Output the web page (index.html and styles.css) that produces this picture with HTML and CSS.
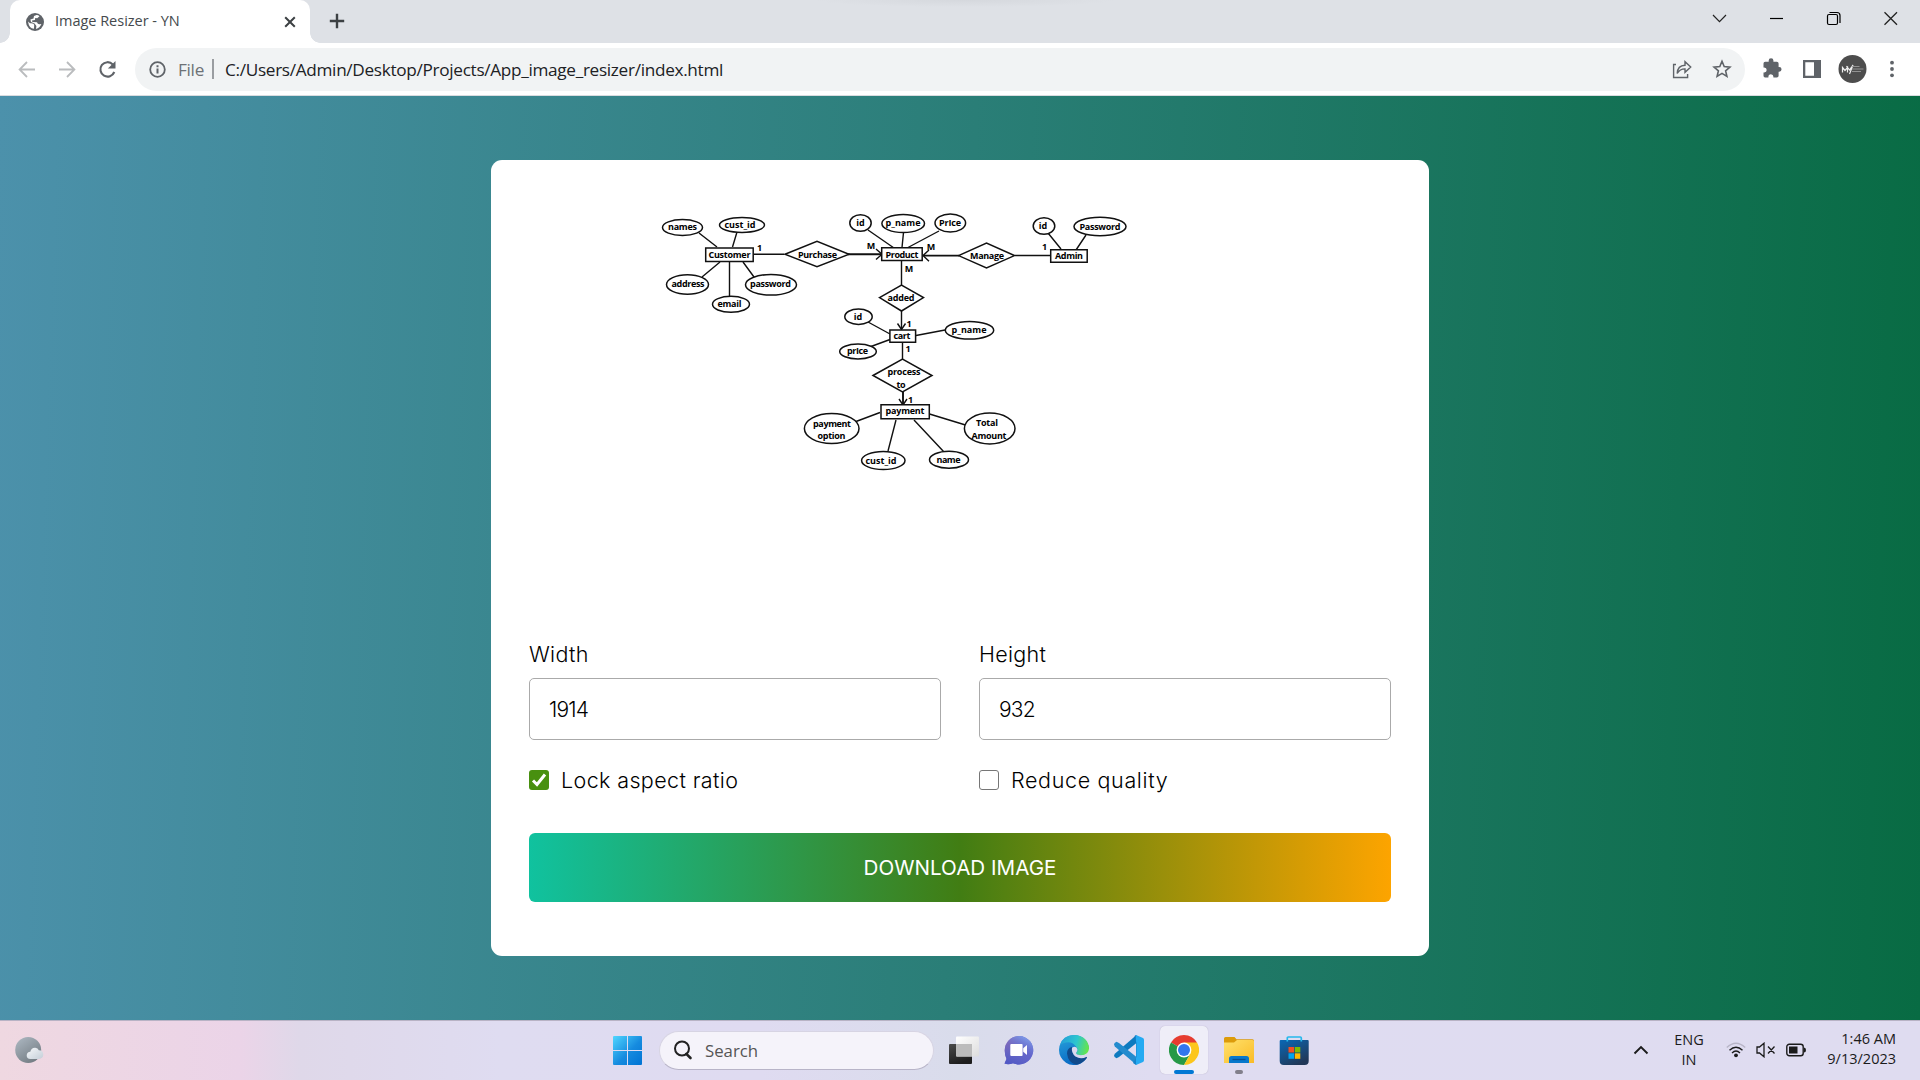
FILE: index.html
```html
<!DOCTYPE html>
<html lang="en">
<head>
<meta charset="utf-8">
<title>Image Resizer - YN</title>
<link rel="stylesheet" href="styles.css">
</head>
<body>
<div class="tabstrip">
  <div class="tab">
    <svg class="favicon" width="18" height="18" viewBox="0 0 18 18"><circle cx="9" cy="9" r="9" fill="#5f6368"/><path d="M2 8.5 L4 10.2 Q7.8 9.8 8.2 11.8 L8 15.8 Q3 15.6 2 8.5Z M10.5 2 Q12 1.8 13.5 3.2 L11.2 5.2 L9.2 5 L9 7 L6 7.6 L6.4 9 L11 9.2 Q11.6 11.5 13.6 11.3 L15.4 11 Q13.8 15 10 15.9 L10.4 13 L8.6 10.4 L5 9 L4.4 6.5 L7.5 5.5 L8 3Z" fill="#fff"/></svg>
    <span class="tab-title">Image Resizer - YN</span>
    <svg class="tab-close" width="12" height="12" viewBox="0 0 12 12"><path d="M1.2 1.2 10.8 10.8M10.8 1.2 1.2 10.8" stroke="#3c4043" stroke-width="2"/></svg>
  </div>
  <svg class="new-tab" width="16" height="16" viewBox="0 0 16 16"><path d="M8 .8V15.2M.8 8H15.2" stroke="#3c4043" stroke-width="2.4"/></svg>
  <div class="window-controls">
    <svg width="57" height="36" viewBox="0 0 57 36"><path d="M22 15l6.5 6.7L35 15" fill="none" stroke="#222" stroke-width="1.2"/></svg>
    <svg width="57" height="36" viewBox="0 0 57 36"><path d="M22 18.5h13" stroke="#000" stroke-width="1.2"/></svg>
    <svg width="57" height="36" viewBox="0 0 57 36"><rect x="22.5" y="14.5" width="10" height="10" rx="1.5" fill="none" stroke="#000" stroke-width="1.2"/><path d="M24.5 12.5h7.5q3 0 3 3V23" fill="none" stroke="#000" stroke-width="1.2"/></svg>
    <svg width="57" height="36" viewBox="0 0 57 36"><path d="M22.5 12.2l12.5 12.5M35 12.2L22.500 24.700" stroke="#222" stroke-width="1.3"/></svg>
  </div>
</div>
<div class="toolbar">
  <svg width="40" height="40" viewBox="0 0 40 40"><path d="M28 20.500H13M20 13l-7.400 7.500L20 28" fill="none" stroke="#babcbe" stroke-width="1.800"/></svg>
  <svg width="40" height="40" viewBox="0 0 40 40"><path d="M12 20.500H27M20 13l7.400 7.500L20 28" fill="none" stroke="#babcbe" stroke-width="1.800"/></svg>
  <svg width="40" height="40" viewBox="0 0 40 40"><path d="M27.300 23a7.200 7.200 0 1 1-1.500-7.600" fill="none" stroke="#5f6368" stroke-width="2.100"/><path d="M28.500 12v7.600h-7.600z" fill="#5f6368"/></svg>
  <div class="omnibox">
    <svg width="17" height="17" viewBox="0 0 17 17"><circle cx="8.500" cy="8.500" r="7.300" fill="none" stroke="#5f6368" stroke-width="1.800"/><path d="M8.500 7.500v5M8.500 4.200v2" stroke="#5f6368" stroke-width="2"/></svg>
    <span class="scheme">File</span>
    <span class="divider"></span>
    <span class="url">C:/Users/Admin/Desktop/Projects/App_image_resizer/index.html</span>
    <svg class="share" width="20" height="20" viewBox="0 0 20 20"><path d="M4 5.500H1.600v13h14V15M5.200 14.500q.4-8 7.800-8.200V2.700l5.700 5.300-5.700 5.300V9.900q-5-.1-7.800 4.600z" fill="none" stroke="#5f6368" stroke-width="1.400"/></svg>
    <svg class="star" width="20" height="20" viewBox="0 0 20 20"><path d="M10 2.300l2.200 5.300 5.700.5-4.300 3.700 1.300 5.600-4.900-3-4.900 3 1.300-5.600L2.100 8.100l5.700-.5z" fill="none" stroke="#5f6368" stroke-width="1.600"/></svg>
  </div>
  <div class="tools">
    <svg width="40" height="40" viewBox="0 0 40 40"><path d="M11.500 14.500q0-1.700 1.700-1.700h3.500v-1.200a2.300 2.300 0 0 1 4.700 0v1.200h3.400q1.800 0 1.800 1.700V18h.6a2.300 2.300 0 0 1 0 4.700h-.6v4.100q0 1.700-1.800 1.700h-3.400v-.8a2.500 2.500 0 0 0-5 0v.8h-3.300q-1.600 0-1.600-1.700v-3.300h.7a2.500 2.500 0 0 0 0-5h-.7z" fill="#5f6368"/></svg>
    <svg width="40" height="40" viewBox="0 0 40 40"><path d="M11 11h18v18H11zM13.300 13.300v13.400h8.700V13.300z" fill="#5f6368" fill-rule="evenodd"/></svg>
    <svg width="40" height="40" viewBox="0 0 40 40"><circle cx="20.500" cy="20" r="14" fill="#4d4d4d"/><path d="M10.500 23.500v-5l2.500 3 2.500-3v5M14.500 17l3 4 3.500-5-3.500 9" fill="none" stroke="#eee" stroke-width="1.200"/><path d="M19.500 17.500h8M20 20h11.500M20 22.500h9" stroke="#9a9a9a" stroke-width=".9"/></svg>
    <svg width="40" height="40" viewBox="0 0 40 40"><g fill="#5f6368"><circle cx="20" cy="13.700" r="1.900"/><circle cx="20" cy="20" r="1.900"/><circle cx="20" cy="26.300" r="1.900"/></g></svg>
  </div>
</div>

<main class="page">
  <div class="wrapper">
    <svg class="preview" width="862" height="422" viewBox="529 198 862 422">
      <g class="links">
        <path d="M699 233l18 14M737 232l-4.500 15M753.500 254.300H784M720 262l-18 15M729.500 261v36M743 262l11 15"/>
        <path d="M868 230l26 18M903.500 232.500l-1.500 15M939 231l-31 16.500M901.500 261v24M901.500 311v18M1015 255.500h35M1048 233l13 16M1086 235l-10 15"/>
        <path d="M868 322l22 12M890 339.500l-19 7M916 335.500l29-5.500M902.500 343v16"/>
        <path d="M880 412.500l-24 9M896 420l-8 31M914 420l30 32M929.500 414l36 11"/>
        <path class="thick" d="M848 254.300h33M924 255.600h35M903 392v13"/>
        <path d="M876 249l6 5.300-6 5.300M929 250l-6 5.600 6 5.600M897.500 323.500l4 6 4-6M899 399l4 6 4-6"/>
      </g>
      <g class="shapes">
        <ellipse cx="682.500" cy="227.500" rx="20" ry="8"/><ellipse cx="742" cy="225" rx="22.500" ry="7.500"/>
        <ellipse cx="687.500" cy="284.500" rx="21" ry="9.700"/><ellipse cx="771" cy="284.800" rx="25.500" ry="10.300"/><ellipse cx="731" cy="304.300" rx="18.500" ry="8"/>
        <ellipse cx="860.500" cy="223" rx="10.700" ry="8.200"/><ellipse cx="903.200" cy="223.500" rx="21.300" ry="9"/><ellipse cx="950.300" cy="223" rx="15.300" ry="9"/>
        <ellipse cx="1044" cy="226" rx="10.800" ry="8.300"/><ellipse cx="1100" cy="226.500" rx="26" ry="9.200"/>
        <ellipse cx="858.500" cy="316.700" rx="13.700" ry="7.700"/><ellipse cx="858" cy="351.500" rx="18.300" ry="7.500"/><ellipse cx="969.500" cy="330.200" rx="24.200" ry="8.800"/>
        <ellipse cx="831.700" cy="428.500" rx="27.300" ry="15"/><ellipse cx="883.300" cy="460.500" rx="21.700" ry="9"/><ellipse cx="949" cy="459.700" rx="19.500" ry="8.500"/><ellipse cx="989.700" cy="428.500" rx="25.300" ry="15.500"/>
        <path d="M785 254.300l32-13 32 13-32 12.500zM958.500 255.600l28-12.600 28 12.600-28 12.400zM879.500 297.600l22-12.600 22 12.600-22 13.400zM873 375.500l29.500-16.500 29.500 16.500-29.500 16.500z"/>
        <path class="box" d="M705.700 248h47.500v13.500h-47.500zM881.700 247.700h40.500v12.800h-40.500zM1050.700 249.700h36.500v12.500h-36.500zM889.900 330h25.700v12.300h-25.700zM881 404.800h48.300v14H881z"/>
      </g>
      <g class="names">
        <text x="682.500" y="230" textLength="29">names</text><text x="740" y="227.500" textLength="31">cust_id</text>
        <text x="729.500" y="257.500" textLength="42">Customer</text><text x="759.500" y="250.500">1</text>
        <text x="817.500" y="257.500" textLength="39">Purchase</text><text x="688" y="287" textLength="33">address</text>
        <text x="770.500" y="287" textLength="41">password</text><text x="729.500" y="306.500" textLength="24">email</text>
        <text x="860.500" y="226">id</text><text x="903" y="225.500" textLength="35">p_name</text><text x="950" y="226" textLength="22">PrIce</text>
        <text x="871" y="248.500">M</text><text x="931" y="249.500">M</text><text x="902" y="257.500" textLength="33">Product</text>
        <text x="909" y="271.500">M</text><text x="987" y="258.500" textLength="34">Manage</text><text x="1044.500" y="250">1</text>
        <text x="1043" y="229">id</text><text x="1100" y="230" textLength="41">Password</text><text x="1069" y="259" textLength="28">Admin</text>
        <text x="901" y="300.500" textLength="27">added</text><text x="909" y="326.500">1</text><text x="858" y="320">id</text>
        <text x="902" y="338.500" textLength="17">cart</text><text x="969" y="332.500" textLength="35">p_name</text>
        <text x="857.500" y="354" textLength="21">prIce</text><text x="908" y="352">1</text>
        <text x="904" y="375" textLength="33">process</text><text x="901" y="387.500" textLength="9">to</text><text x="910.500" y="402.500">1</text>
        <text x="905" y="414" textLength="39">payment</text><text x="832" y="427" textLength="38">payment</text><text x="831.500" y="439" textLength="28">option</text>
        <text x="881" y="463.500" textLength="31">cust_id</text><text x="948.500" y="462.500" textLength="24">name</text>
        <text x="987" y="425.500" textLength="22">Total</text><text x="989" y="438.500" textLength="35">Amount</text>
      </g>
    </svg>
    <div class="row sizes">
      <label class="column"><span>Width</span><input type="text" value="1914"></label>
      <label class="column"><span>Height</span><input type="text" value="932"></label>
    </div>
    <div class="row checkboxes">
      <label class="check lock"><span class="tick on"><svg width="20" height="20" viewBox="0 0 20 20"><path d="M4 10.500l4 4 8-10" fill="none" stroke="#fff" stroke-width="3"/></svg></span><span>Lock aspect ratio</span></label>
      <label class="check quality"><span class="tick"></span><span>Reduce quality</span></label>
    </div>
    <button class="download-btn">DOWNLOAD IMAGE</button>
  </div>
</main>

<footer class="taskbar">
  <svg class="weather" width="30" height="28" viewBox="0 0 30 28">
    <defs><linearGradient id="moon" x1="0" y1="0" x2=".7" y2="1"><stop offset="0" stop-color="#afbac4"/><stop offset="1" stop-color="#737c83"/></linearGradient><linearGradient id="cloud" x1="0" y1="0" x2="1" y2="1"><stop stop-color="#f6f8fa"/><stop offset="1" stop-color="#c4ced8"/></linearGradient></defs>
    <circle cx="13.200" cy="14" r="13" fill="url(#moon)"/><path d="M15.500 23q-4-.4-3.800-3.800.3-3 3.600-3.400 1.200-4.300 5-4 2.700.3 3.500 2.500 4.400 0 4.500 4.300 0 4-4.400 4.400z" fill="url(#cloud)"/>
  </svg>
  <svg class="start" width="29" height="29" viewBox="0 0 29 29"><defs><linearGradient id="win" x1="0" y1="0" x2="1" y2="1"><stop stop-color="#50d6ff"/><stop offset=".55" stop-color="#168bdf"/><stop offset="1" stop-color="#0073d4"/></linearGradient></defs><path d="M0 1q0-1 1-1h13v14H0zM15 0h13q1 0 1 1v13H15zM0 15h14v14H1q-1 0-1-1zM15 15h14v13q0 1-1 1H15z" fill="url(#win)"/></svg>
  <div class="search"><svg width="20" height="20" viewBox="0 0 20 20"><circle cx="9" cy="8.500" r="7" fill="none" stroke="#222" stroke-width="2"/><path d="M13.300 13.800l4.200 4.200" stroke="#222" stroke-width="2.600" stroke-linecap="round"/></svg><span>Search</span></div>
  <div class="apps">
    <div class="app"><svg width="30" height="30" viewBox="0 0 30 30"><defs><linearGradient id="tv" x1="0" y1="0" x2=".4" y2="1"><stop stop-color="#4b4b4b"/><stop offset="1" stop-color="#1d1d1d"/></linearGradient><linearGradient id="tw" x1="0" y1="0" x2="1" y2="1"><stop stop-color="#fff"/><stop offset="1" stop-color="#ddd"/></linearGradient></defs><rect y="9" width="23" height="20" rx="1" fill="url(#tv)"/><rect x="7" y="1.500" width="23" height="20" rx="1" fill="url(#tw)"/><path d="M7 9h16v12.500H8q-1 0-1-1z" fill="#bcbcbc"/></svg></div>
    <div class="app"><svg width="30" height="30" viewBox="0 0 30 30"><defs><linearGradient id="chat" x1="0" y1=".2" x2="1" y2=".6"><stop stop-color="#9569ab"/><stop offset=".5" stop-color="#6264c7"/><stop offset="1" stop-color="#5f63d2"/></linearGradient><linearGradient id="cg" x1=".3" y1="1" x2=".8" y2="0"><stop stop-color="#5159c5"/><stop offset=".5" stop-color="#6869c7" stop-opacity=".5"/><stop offset="1" stop-color="#83a5ef"/></linearGradient></defs><path d="M15 1a14.300 14.300 0 1 1-6 27.300Q4 30 .5 28.500L2.500 24Q.7 20 .7 15.500A14.300 14.300 0 0 1 15 1z" fill="url(#chat)"/><path d="M15 1a14.300 14.300 0 1 1-6 27.300Q4 30 .5 28.500L2.500 24Q.7 20 .7 15.500A14.300 14.300 0 0 1 15 1z" fill="url(#cg)"/><rect x="6.300" y="9" width="12.300" height="12" rx="1" fill="#fff"/><path d="M19.200 13.200l3.800-3.200v10l-3.800-3.200z" fill="#fff"/></svg></div>
    <div class="app"><svg width="30" height="30" viewBox="0 0 30 30"><defs><linearGradient id="e1" x1="0" y1=".3" x2="1" y2=".5"><stop stop-color="#249dd8"/><stop offset=".55" stop-color="#2dc6cf"/><stop offset="1" stop-color="#65e54b"/></linearGradient><linearGradient id="e2" x1="0" y1="0" x2=".4" y2="1"><stop stop-color="#2aa4dc"/><stop offset="1" stop-color="#0869c3"/></linearGradient></defs><path d="M15 0a15 15 0 1 0 12.500 23.300L17 18 30 14A15 15 0 0 0 15 0z" fill="url(#e2)"/><path d="M1 10Q4 0 15 0C25 0 30 7 30 13.500Q29.500 20 22.500 20.300 17.500 20 17 18 20 15 17 11.500 13 6 7 7.500 3 8 1 10z" fill="url(#e1)"/><path d="M13 12Q8 13 8 18.500q1 9 9 11.300Q24 28.500 28 22.700q0-1.500-1.300-.9Q21 24 16.500 21.500 12.500 18.500 13 12z" fill="#114a8b"/><path d="M13 12.700q4.500-2.500 5.500 1.800 0 1.500-1.500 3.500.3 2 5.500 2.300 5 0 7-3l-1.800 4.500q-6 3.200-11.200-.3Q12 17.500 13 12.700z" fill="#dad9ee"/></svg></div>
    <div class="app"><svg width="30" height="30" viewBox="0 0 30 30"><path d="M0 20.500q0 1.500 2.500 2.700L5 22 22.500 8V0L.8 18.800z" fill="#0e7abf"/><path d="M0 9.500Q0 8 2.500 6.700L5 8l17.500 14v8L.8 11.500z" fill="#238bce"/><path d="M22 0l7 3q1 .5 1 2v20q0 1.500-1 2l-7 3z" fill="#25aaf2"/><path d="M20.500 1L22 0v30l-3-2 3.500-6V8z" fill="#1583cb"/></svg></div>
    <div class="app active"><svg width="30" height="30" viewBox="0 0 30 30"><path d="M15 15L2 7.500Q6.500 0 15 0t13 7.500z" fill="#e63c30"/><path d="M15 15L2 7.500A15 15 0 0 0 15 30l6.500-11.500z" fill="#279947"/><path d="M15 7.500h13A15 15 0 0 1 15 30l6.500-11.500z" fill="#fcc61c"/><circle cx="15" cy="15" r="7.400" fill="#fff"/><circle cx="15" cy="15" r="6" fill="#3276ed"/></svg><i class="mark"></i></div>
    <div class="app running"><svg width="30" height="30" viewBox="0 0 30 30"><defs><linearGradient id="fold" x1="0" y1="0" x2="1" y2="1"><stop stop-color="#ffe16c"/><stop offset="1" stop-color="#fabb26"/></linearGradient></defs><path d="M0 3.500Q0 2 1.500 2h9l2 2.300H28.500Q30 4.300 30 6v5H0z" fill="#dc9b0a"/><path d="M0 7.500h10l3-2.500h15.500q1.500 0 1.500 1.500V28H0z" fill="url(#fold)"/><path d="M5 28v-4.500q0-2.500 2.500-2.500h15q2.500 0 2.500 2.500V28z" fill="#0878cc"/><path d="M8.500 24.500h13" stroke="#084f93" stroke-width="1.300"/></svg><i class="mark"></i></div>
    <div class="app"><svg width="30" height="30" viewBox="0 0 30 30"><defs><linearGradient id="st" x1="0" y1="0" x2=".6" y2="1"><stop stop-color="#0968b6"/><stop offset="1" stop-color="#213858"/></linearGradient></defs><path d="M.7 6q0-1 1-1h27q1 0 1 1v20q0 4-4 4h-21q-4 0-4-4z" fill="url(#st)"/><path d="M8.300 6.500V3q0-1 1-1h12q1 0 1 1v3.500" fill="none" stroke="#26b8ec" stroke-width="1.700"/><path d="M9.500 12H15v5.500H9.500z" fill="#f25022"/><path d="M15.800 12h5.500v5.500h-5.500z" fill="#7fba00"/><path d="M9.500 18.300H15v5.500H9.500z" fill="#00a4ef"/><path d="M15.800 18.300h5.500v5.500h-5.500z" fill="#ffb900"/></svg></div>
  </div>
  <div class="tray">
    <svg class="more" width="16" height="10" viewBox="0 0 16 10"><path d="M1.500 8.500L8 2l6.500 6.500" fill="none" stroke="#1b1b1b" stroke-width="1.900"/></svg>
    <div class="lang">ENG<br>IN</div>
    <svg class="wifi" width="20" height="16" viewBox="0 0 20 16"><g fill="none" stroke="#1b1b1b" stroke-width="1.400"><path d="M.8 5.500q9.200-8.700 18.400 0" stroke="#b8b5c7"/><path d="M3.500 8.300q6.500-6 13 0M6 10.900q4-3.600 8 0"/></g><circle cx="10" cy="13.300" r="1.900" fill="#1b1b1b"/></svg>
    <svg class="sound" width="20" height="16" viewBox="0 0 20 16"><path d="M1 5h2.500L8 1.200v13.600L3.500 11H1zM12 4.500l6.500 7M18.500 4.500l-6.500 7" fill="none" stroke="#1b1b1b" stroke-width="1.300"/></svg>
    <svg class="battery" width="20" height="14" viewBox="0 0 20 14"><rect x=".8" y="1.300" width="16.400" height="11.400" rx="2.500" fill="none" stroke="#1b1b1b" stroke-width="1.400"/><rect x="3" y="3.500" width="8.500" height="7" fill="#1b1b1b"/><path d="M18 4.500q2 0 2 2.500t-2 2.500z" fill="#1b1b1b"/></svg>
    <div class="clock">1:46 AM<br>9/13/2023</div>
  </div>
</footer>
</body>
</html>
```

FILE: styles.css
```css
* { box-sizing: border-box; }
body {
  margin: 0;
  height: 1080px;
  overflow: hidden;
  display: flex;
  flex-direction: column;
  font-family: "Open Sans", sans-serif;
}
svg { display: block; flex: none; }

/* browser chrome */
.tabstrip {
  height: 43px;
  flex: none;
  display: flex;
  background: radial-gradient(ellipse 150px 7px at 965px 0, #d5d8dd, #dee1e6);
}
.tab {
  position: relative;
  width: 300px;
  margin-left: 10px;
  padding: 0 14px 0 16px;
  display: flex;
  align-items: center;
  background: #fff;
  border-radius: 10px 10px 0 0;
}
.tab::before, .tab::after {
  content: "";
  position: absolute;
  bottom: 0;
  width: 10px;
  height: 10px;
}
.tab::before { left: -10px; background: radial-gradient(circle at 0 0, transparent 9.5px, #fff 10px); }
.tab::after { right: -10px; background: radial-gradient(circle at 100% 0, transparent 9.5px, #fff 10px); }
.favicon { margin-right: 11px; }
.tab-title { padding-bottom: 2px; font-size: 14.5px; color: #45494d; letter-spacing: -.02px; white-space: nowrap; }
.tab-close { margin-left: auto; }
.new-tab { margin: 13px 0 0 19px; }
.window-controls { display: flex; margin: 0 1px 0 auto; }

.toolbar {
  height: 53px;
  flex: none;
  display: flex;
  align-items: center;
  padding: 0 7px 0 7px;
  background: #fff;
  border-bottom: 1px solid #dadce0;
}
.omnibox {
  width: 1610px;
  height: 43px;
  margin-left: 8px;
  padding: 0 13px 0 14px;
  display: flex;
  align-items: center;
  border-radius: 22px;
  background: #f1f3f4;
  font-size: 17.2px;
  white-space: nowrap;
}
.scheme { width: 27px; margin-left: 12px; color: #6d7176; letter-spacing: -.3px; }
.divider { width: 2px; height: 20px; margin: 0 11px 0 7px; background: #9a9da1; }
.url { color: #202124; letter-spacing: -.31px; }
.share { margin-left: auto; }
.star { margin-left: 20px; }
.tools { display: flex; margin-left: 7px; }

/* resizer page */
.page {
  flex: 1;
  display: flex;
  justify-content: center;
  align-items: center;
  background: linear-gradient(92deg, #4c91ab, #086b43);
}
.wrapper {
  width: 938px;
  height: 796px;
  padding: 38px;
  border-radius: 11px;
  background: #fff;
  font-family: "Inter", sans-serif;
  font-size: 21.5px;
  font-weight: 350;
  color: #000;
}
.links path { fill: none; stroke: #111; stroke-width: 1.4; }
.links .thick { stroke-width: 1.9; }
.shapes ellipse, .shapes path { fill: #fff; stroke: #111; stroke-width: 1.5; }
.names text { font: 700 9px "Open Sans", sans-serif; text-anchor: middle; fill: #000; }
.row { display: flex; gap: 38px; }
.sizes { margin: 18px 0 30px; }
.column { flex: 1; display: flex; flex-direction: column; }
.column span { height: 40px; line-height: 32px; letter-spacing: .3px; }
.column input {
  width: 100%;
  height: 62px;
  padding: 0 19px;
  border: 1px solid #aaa;
  border-radius: 5px;
  outline: none;
  font: 350 21px "Inter", sans-serif;
  letter-spacing: -.8px;
}
.check { flex: 1; display: flex; align-items: center; gap: 12px; height: 20px; white-space: nowrap; }
.tick { width: 20px; height: 20px; border: 1px solid #767676; border-radius: 3px; }
.tick.on { border: 0; background: #48900f; }
.lock { letter-spacing: .38px; }
.quality { letter-spacing: .65px; }
.download-btn {
  display: block;
  width: 862px;
  height: 69px;
  margin-top: 43px;
  border: 0;
  border-radius: 6px;
  background: linear-gradient(to right, #10c29f, #417d13 50%, #fda400);
  color: #fff;
  font: 20.6px "Inter", sans-serif;
}

/* desktop taskbar */
.taskbar {
  height: 60px;
  flex: none;
  display: flex;
  align-items: center;
  border-top: 1px solid #b8b3c5;
  background: linear-gradient(to right, #efd8e1, #ebd4e8 240px, #dfd8e9 300px, #dfdcf1 500px, #dfdbf1 760px, #d9dceb 960px, #dfdcf1 1150px, #dfdcf0);
  color: #1b1b1b;
}
.weather { margin: 0 0 2px 15px; }
.start { margin: 0 17px 0 568px; }
.search {
  width: 275px;
  height: 39px;
  margin-bottom: 1px;
  padding-left: 13px;
  display: flex;
  align-items: center;
  gap: 12px;
  border-radius: 20px;
  border: 1px solid #d7d4e3;
  border-bottom-color: #b8b4c8;
  background: #f5f3fa;
  color: #555;
  font-size: 16.8px;
}
.apps { display: flex; margin: 0 0 1px 6px; gap: 7px; }
.app {
  position: relative;
  width: 48px;
  height: 48px;
  display: flex;
  align-items: center;
  justify-content: center;
  border-radius: 5px;
}
.app.active { background: #efeef8; box-shadow: 0 0 1px #a9a5bd; }
.mark {
  position: absolute;
  bottom: 0;
  width: 8px;
  height: 4px;
  border-radius: 2px;
  background: #817f8b;
}
.active .mark { width: 20px; background: #0078d4; }
.tray { display: flex; align-items: center; margin: 0 24px 1px auto; font-size: 14.5px; line-height: 20px; }
.lang { width: 34px; margin: 0 20px 0 23px; text-align: center; }
.sound { margin-left: 10px; }
.battery { margin-left: 10px; }
.clock { width: 72px; margin: 0 0 2px 18px; text-align: right; white-space: nowrap; }
```
